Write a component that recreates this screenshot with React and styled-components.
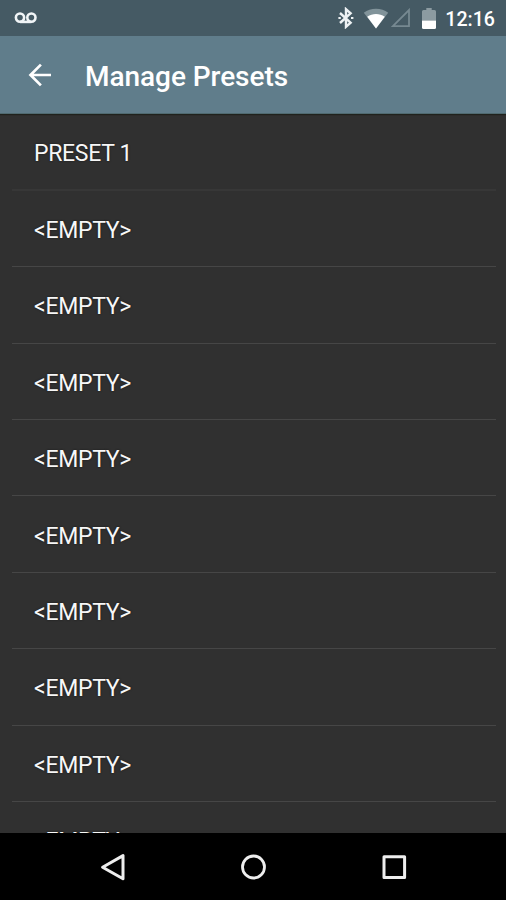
import styled, { createGlobalStyle } from "styled-components"

const presets = ["PRESET 1", ...Array(9).fill("<EMPTY>")];

const App = () => {
    return(
    <>
        <GlobalStyle />
        <Screen>
            <StatusBar>
                <Voicemail />
                <StatusIcons>
                    <Bluetooth />
                    <Wifi />
                    <Signal />
                    <Battery />
                    <Clock>12:16</Clock>
                </StatusIcons>
            </StatusBar>
            <Toolbar>
                <BackButton aria-label="Back">
                    <svg width="24" height="24" viewBox="0 0 24 24" fill="none" stroke="#fff" strokeWidth="2.7">
                        <path d="M24 12H3.4M13.9 1.600L3.500 12l10.400 10.400" />
                    </svg>
                </BackButton>
                <Title>Manage Presets</Title>
            </Toolbar>
            <PresetList>
                {presets.map((name, i) => (
                    <PresetRow key={i} faint={i === 0 ? 1 : 0}>
                        <PresetName>{name}</PresetName>
                    </PresetRow>
                ))}
            </PresetList>
            <NavBar>
                <NavButton aria-label="Back">
                    <svg width="30" height="30" viewBox="0 0 30 30" fill="none" stroke="#eee" strokeWidth="3" strokeLinejoin="round">
                        <path d="M25 3.6v23.2L4.6 15.2z" />
                    </svg>
                </NavButton>
                <NavButton aria-label="Home">
                    <svg width="30" height="30" viewBox="0 0 30 30" fill="none" stroke="#eee" strokeWidth="2.8">
                        <circle cx="15.5" cy="15" r="11" />
                    </svg>
                </NavButton>
                <NavButton aria-label="Recent apps">
                    <svg width="30" height="30" viewBox="0 0 30 30" fill="none" stroke="#eee" strokeWidth="3" strokeLinejoin="round">
                        <rect x="6" y="4.8" width="20.6" height="20.6" />
                    </svg>
                </NavButton>
            </NavBar>
        </Screen>
    </>
    )
}

const Voicemail = () => (
    <svg width="24" height="14" viewBox="0 0 24 14" fill="none" stroke="#f1f5f7" strokeWidth="2.6">
        <circle cx="6" cy="6.6" r="4.1" />
        <circle cx="17.4" cy="6.6" r="4.1" />
        <path d="M6 10.9h11.4" />
    </svg>
);

const Bluetooth = () => (
    <svg width="16" height="22" viewBox="0 0 16 22" fill="none" stroke="#eef2f4" strokeWidth="2.4">
        <path d="M2 6l10.600 9.700L8 19.800V2.200l4.600 4.100L2 16" />
        <path d="M1.600 9.900v2.200M14.200 9.900v2.200" />
    </svg>
);

const Wifi = () => (
    <svg width="26" height="21" viewBox="0 0 26 21">
        <path d="M13 20.400L.8 4.700C4.200 2.200 8.400.8 13 .8s8.800 1.400 12.200 3.900z" fill="#81939a" />
        <path d="M13 20.400L4.200 8.700C7 6.700 9.800 5.900 13 5.900s6 .8 8.800 2.800z" fill="#fff" />
    </svg>
);

const Signal = () => (
    <svg width="20" height="20" viewBox="0 0 20 20" fill="none" stroke="#768991" strokeWidth="1.8">
        <path d="M18 2v16.200H1.900z" />
    </svg>
);

const Battery = () => (
    <svg width="14" height="21" viewBox="0 0 14 21">
        <path d="M4.300 0h5.400v2H12.500q1.500 0 1.500 1.500V12.500H0V3.500Q0 2 1.500 2h2.800z" fill="#8c9ba1" />
        <path d="M0 12.500h14v7q0 1.500-1.500 1.500h-11Q0 21 0 19.500z" fill="#fff" />
    </svg>
);

const GlobalStyle = createGlobalStyle`
    *{
        box-sizing: border-box;
    }
    body{
        margin: 0;
        background: #303030;
        font-family: Roboto, sans-serif;
    }
    svg{
        display: block;
        flex-shrink: 0;
    }
`
const Screen = styled.div`
    width: 100%;
    height: 100vh;
    display: flex;
    flex-direction: column;
    overflow: hidden;
    background: #303030;
`
const StatusBar = styled.div`
    height: 36px;
    flex-shrink: 0;
    display: flex;
    justify-content: space-between;
    align-items: center;
    padding: 0 11px 0 14px;
    background: #455a64;
`
const StatusIcons = styled.div`
    display: flex;
    align-items: center;
    svg:nth-child(1){
        margin-right: 9px;
    }
    svg:nth-child(2){
        margin-right: 2px;
    }
    svg:nth-child(3){
        margin-right: 11px;
    }
    svg:nth-child(4){
        margin-right: 9px;
    }
`
const Clock = styled.span`
    font-size: 19.6px;
    font-weight: 500;
    line-height: 36px;
    color: #fff;
    padding-top: 3px;
`
const Toolbar = styled.header`
    height: 78px;
    flex-shrink: 0;
    display: flex;
    align-items: center;
    padding-left: 27px;
    background: #607d8b;
    border-bottom: 1px solid #506a70;
    box-shadow: 0 1px 1px #20221d;
    z-index: 1;
`
const BackButton = styled.button`
    border: none;
    padding: 0;
    margin-right: 34px;
    background: transparent;
    cursor: pointer;
`
const Title = styled.h1`
    margin: 0;
    font-size: 28px;
    font-weight: 500;
    line-height: 36px;
    letter-spacing: -.05px;
    color: #fff;
    padding-top: 4px;
`
const PresetList = styled.ul`
    flex: 1;
    min-height: 0;
    overflow: hidden;
    list-style: none;
    margin: 0;
    padding: 0 10px 0 12px;
`
const PresetRow = styled.li`
    height: ${props => props.faint ? "76.800px" : "76.400px"};
    display: flex;
    align-items: center;
    padding: 5px 22px 0;
    border-bottom: ${props => props.faint ? "2px solid #373737" : "1px solid #464646"};
`
const PresetName = styled.span`
    font-size: 23px;
    line-height: 30px;
    letter-spacing: -.3px;
    color: #f7f7f7;
    text-shadow: 0 0 2px #151515;
`
const NavBar = styled.nav`
    height: 67px;
    flex-shrink: 0;
    display: flex;
    justify-content: center;
    align-items: center;
    gap: 110px;
    background: #000;
`
const NavButton = styled.button`
    border: none;
    padding: 0;
    background: transparent;
    cursor: pointer;
`
export default App;
